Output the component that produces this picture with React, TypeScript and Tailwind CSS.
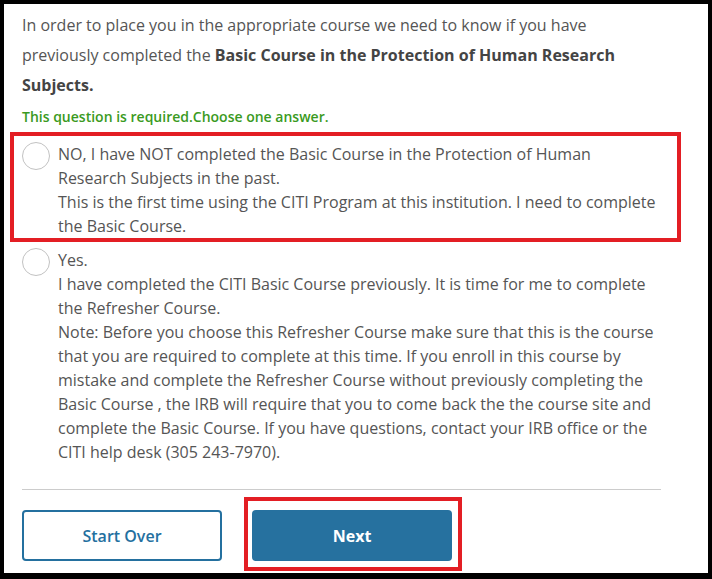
const options = [
  {
    id: 'no',
    lines: [
      'NO, I have NOT completed the Basic Course in the Protection of Human Research Subjects in the past.',
      'This is the first time using the CITI Program at this institution. I need to complete the Basic Course.',
    ],
    highlighted: true,
  },
  {
    id: 'yes',
    lines: [
      'Yes.',
      'I have completed the CITI Basic Course previously. It is time for me to complete the Refresher Course.',
      'Note: Before you choose this Refresher Course make sure that this is the course that you are required to complete at this time. If you enroll in this course by mistake and complete the Refresher Course without previously completing the Basic Course , the IRB will require that you to come back the the course site and complete the Basic Course. If you have questions, contact your IRB office or the CITI help desk (305 243-7970).',
    ],
    highlighted: false,
  },
];

function Radio() {
  return <span className="h-[28px] w-[28px] flex-none rounded-full border border-[#c2c2c2] bg-white" />;
}

export default function App() {
  return (
    <div
      className="box-border h-[579px] w-[712px] border-[4px] border-b-[6px] border-black bg-white pl-[18px] pr-[47px] pt-[6px] text-[#555] antialiased"
      style={{ fontFamily: '"Open Sans", "Noto Sans", sans-serif' }}
    >
      <p className="text-[16px] leading-[30px]">
        In order to place you in the appropriate course we need to know if you have previously completed the{' '}
        <b className="font-bold text-[#444]">Basic Course in the Protection of Human Research Subjects.</b>
      </p>
      <p className="mt-[7px] text-[14px] font-semibold leading-[20px] text-[#3a9a22]">
        This question is required.Choose one answer.
      </p>

      {options.map((opt) => (
        <label
          key={opt.id}
          className={
            opt.highlighted
              ? '-ml-[12px] -mr-[20px] mt-[5px] flex items-start gap-[8px] border-[4px] border-[#e31e24] pl-[8px] pr-[16px] pt-[6px]'
              : 'mt-[6px] flex items-start gap-[8px]'
          }
        >
          <Radio />
          <span className="text-[16px] leading-[24px]">
            {opt.lines.map((line, i) => (
              <span key={i} className="block">
                {line}
              </span>
            ))}
          </span>
        </label>
      ))}

      <div className="mt-[25px] h-px bg-[#cccccc]" />

      <div className="mt-[7px] flex items-start gap-[22px]">
        <button className="mt-[13px] h-[51px] w-[200px] rounded-[4px] border-2 border-[#24709f] bg-white text-[16px] font-semibold text-[#24709f]">
          Start Over
        </button>
        <div className="border-[4px] border-[#e31e24] pb-[6px] pl-[4px] pr-[6px] pt-[9px]">
          <button className="h-[51px] w-[200px] rounded-[4px] bg-[#26719f] text-[16px] font-bold text-white">
            Next
          </button>
        </div>
      </div>
    </div>
  );
}
